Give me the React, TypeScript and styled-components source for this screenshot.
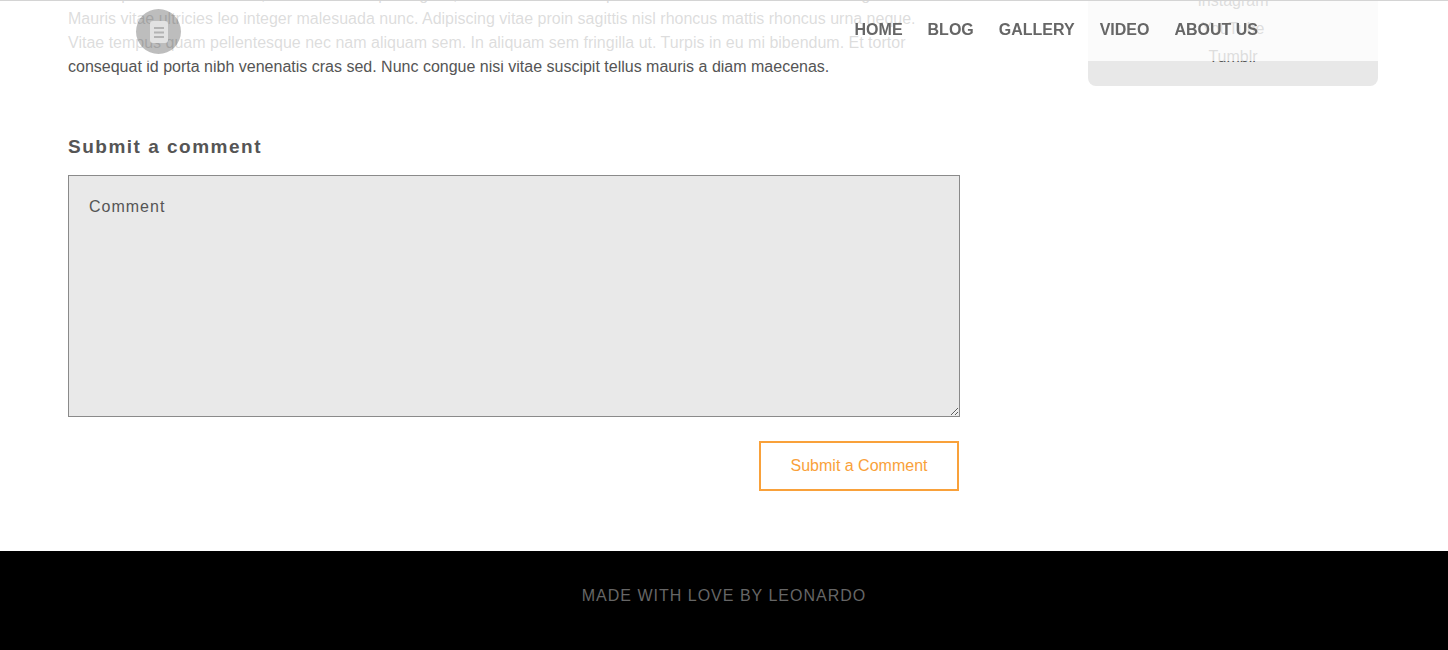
import React from "react";
import styled, { createGlobalStyle } from "styled-components";

const GlobalStyle = createGlobalStyle`
  html, body { margin: 0; padding: 0; background: #fff; }
  body { font-family: "Liberation Sans", Arial, Helvetica, sans-serif; color: #555; overflow: hidden; }
  * { box-sizing: border-box; }
`;

const Header = styled.header`
  position: fixed;
  top: 0;
  left: 0;
  right: 0;
  height: 61px;
  border-top: 1px solid #d4d4d4;
  background: rgba(255, 255, 255, 0.8);
  display: flex;
  align-items: center;
  justify-content: space-between;
  padding: 0 190px 0 136px;
  z-index: 10;
`;

const MenuButton = styled.button`
  width: 45px;
  height: 45px;
  border-radius: 50%;
  border: none;
  padding: 0;
  background: rgba(0, 0, 0, 0.26);
  display: flex;
  align-items: center;
  justify-content: center;
  cursor: pointer;
  margin-top: 1px;
`;

const Nav = styled.nav`
  display: flex;
  gap: 25px;
  margin-top: -2px;
`;

const NavLink = styled.a`
  font-weight: 700;
  font-size: 16px;
  color: #666;
  text-decoration: none;
  text-transform: uppercase;
`;

const Page = styled.div`
  min-height: 650px;
  display: flex;
  flex-direction: column;
`;

const Main = styled.main`
  display: flex;
  gap: 128px;
  padding: 0 70px 60px 68px;
  margin-top: -17px;
`;

const Article = styled.article`
  width: 892px;
  display: flex;
  flex-direction: column;
`;

const Paragraph = styled.p`
  margin: 0;
  font-size: 16px;
  line-height: 24px;
  color: #555;
`;

const Line = styled.span`
  display: block;
  white-space: nowrap;
`;

const Heading = styled.h3`
  margin: 56px 0 16px;
  font-size: 19px;
  line-height: 24px;
  font-weight: 700;
  letter-spacing: 1.5px;
  color: #555;
`;

const CommentBox = styled.textarea`
  width: 892px;
  height: 242px;
  background: #e9e9e9;
  border: 1px solid #8a8a8a;
  padding: 21px 20px 20px;
  font-family: "Liberation Sans", Arial, Helvetica, sans-serif;
  font-size: 16px;
  line-height: 20px;
  letter-spacing: 1px;
  color: #555;
  display: block;
  margin: 0;
  &::placeholder { color: #555; opacity: 1; }
`;

const Actions = styled.div`
  display: flex;
  justify-content: flex-end;
  margin-top: 24px;
  padding-right: 1px;
`;

const SubmitButton = styled.button`
  width: 200px;
  height: 50px;
  background: #fff;
  border: 2px solid #f9a13a;
  color: #f9a13a;
  font-family: "Liberation Sans", Arial, Helvetica, sans-serif;
  font-size: 16px;
  cursor: pointer;
`;

const Aside = styled.aside`
  width: 290px;
  flex-shrink: 0;
  align-self: flex-start;
`;

const SocialCard = styled.ul`
  list-style: none;
  margin: 0;
  padding: 4px 0 15px;
  background: #e8e8e8;
  border-radius: 0 0 8px 8px;
`;

const SocialItem = styled.li`
  text-align: center;
  font-size: 16px;
  line-height: 28px;
  color: #555;
`;

const Footer = styled.footer`
  margin-top: auto;
  background: #000;
  height: 99px;
  display: flex;
  justify-content: center;
  padding-top: 36px;
`;

const FooterText = styled.p`
  margin: 0;
  color: #666;
  font-size: 16px;
  line-height: 18px;
  letter-spacing: 1px;
  text-transform: uppercase;
`;

const PageIcon = () => (
  <svg width="20" height="24" viewBox="0 0 20 24">
    <rect x="1" y="1" width="18" height="22" rx="3" fill="#e2e2e2" />
    <line x1="5" y1="8" x2="15" y2="8" stroke="#b3b3b3" strokeWidth="2" />
    <line x1="5" y1="12.5" x2="15" y2="12.5" stroke="#b3b3b3" strokeWidth="2" />
    <line x1="5" y1="17" x2="15" y2="17" stroke="#b3b3b3" strokeWidth="2" />
  </svg>
);

const navItems = ["Home", "Blog", "Gallery", "Video", "About us"];
const socials = ["Instagram", "YouTube", "Tumblr"];
const lines = [
  "Lorem ipsum dolor sit amet, consectetur adipiscing elit, sed do eiusmod tempor incididunt ut labore et dolore magna.",
  "Mauris vitae ultricies leo integer malesuada nunc. Adipiscing vitae proin sagittis nisl rhoncus mattis rhoncus urna neque.",
  "Vitae tempus quam pellentesque nec nam aliquam sem. In aliquam sem fringilla ut. Turpis in eu mi bibendum. Et tortor",
  "consequat id porta nibh venenatis cras sed. Nunc congue nisi vitae suscipit tellus mauris a diam maecenas.",
];

export default function App() {
  return (
    <>
      <GlobalStyle />
      <Header>
        <MenuButton aria-label="Menu">
          <PageIcon />
        </MenuButton>
        <Nav>
          {navItems.map((item) => (
            <NavLink key={item} href="#">
              {item}
            </NavLink>
          ))}
        </Nav>
      </Header>
      <Page>
        <Main>
          <Article>
            <Paragraph>
              {lines.map((l) => (
                <Line key={l}>{l}</Line>
              ))}
            </Paragraph>
            <Heading>Submit a comment</Heading>
            <CommentBox placeholder="Comment" />
            <Actions>
              <SubmitButton>Submit a Comment</SubmitButton>
            </Actions>
          </Article>
          <Aside>
            <SocialCard>
              {socials.map((s) => (
                <SocialItem key={s}>{s}</SocialItem>
              ))}
            </SocialCard>
          </Aside>
        </Main>
        <Footer>
          <FooterText>Made with love by Leonardo</FooterText>
        </Footer>
      </Page>
    </>
  );
}
